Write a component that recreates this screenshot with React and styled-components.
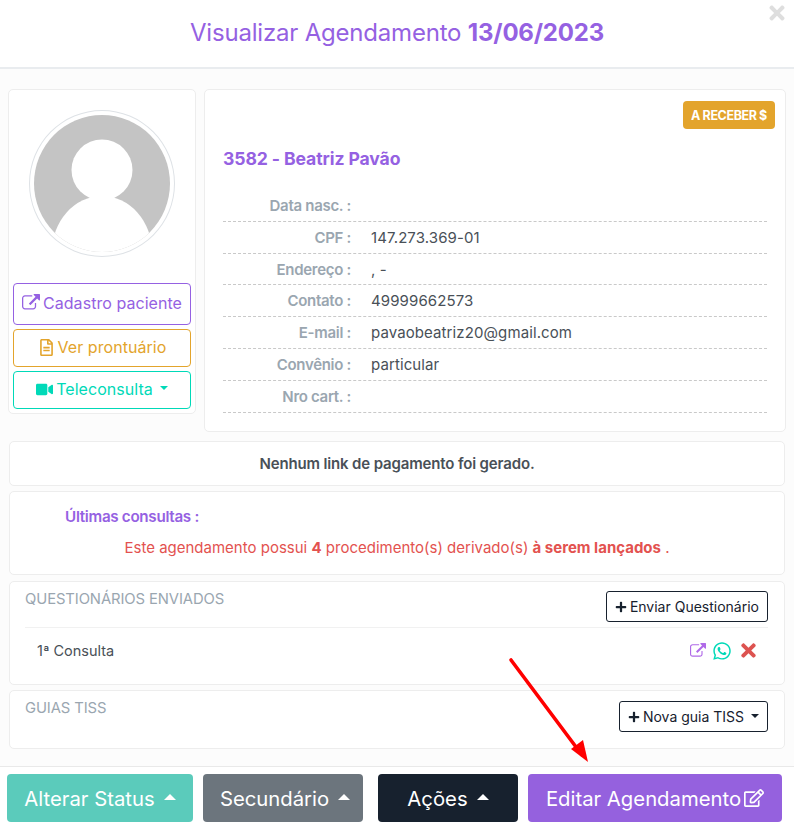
import styled, { createGlobalStyle } from "styled-components";
import {
  FaTimes,
  FaRegFileAlt,
  FaVideo,
  FaWhatsapp,
  FaPlus,
  FaRegEdit,
} from "react-icons/fa";

const Global = createGlobalStyle`
  html, body { margin: 0; padding: 0; background: #fff; }
  * { box-sizing: border-box; }
  body { font-family: Inter, "Liberation Sans", sans-serif; color: #495057; }
`;

const purple = "#9561e2";
const orange = "#e3a42c";
const teal = "#00d9b8";

const Modal = styled.div`
  position: relative;
  width: 794px;
  height: 833px;
  overflow: hidden;
  background: #fff;
  display: flex;
  flex-direction: column;
`;

const Header = styled.header`
  height: 69px;
  flex: none;
  display: flex;
  justify-content: center;
  padding-top: 18px;
  border-bottom: 2px solid #e9ecef;
`;

const Title = styled.h1`
  margin: 0;
  font-size: 24px;
  line-height: 30px;
  font-weight: 400;
  color: ${purple};
  letter-spacing: -0.2px;
  b {
    font-weight: 700;
  }
`;

const Close = styled.span`
  position: absolute;
  top: 2px;
  right: 6px;
  font-size: 22px;
  line-height: 22px;
  color: #dedede;
`;

const Body = styled.main`
  flex: 1;
  background: #fcfcfc;
  padding: 20px 8px 0;
`;

const TopRow = styled.div`
  display: grid;
  grid-template-columns: 188px 582px;
  gap: 8px;
  align-items: start;
`;

const Card = styled.section`
  background: #fff;
  border: 1px solid #ededed;
  border-radius: 5px;
`;

const ProfileCard = styled(Card)`
  height: 325px;
  padding: 20px 4px 0;
  display: flex;
  flex-direction: column;
  align-items: center;
`;

const Avatar = styled.div`
  width: 146px;
  height: 147px;
  padding: 4px;
  border: 1px solid #dee2e6;
  border-radius: 50%;
  margin-bottom: 26px;
  svg {
    display: block;
  }
`;

const OutlineButton = styled.div`
  width: 178px;
  height: ${(p) => p.$h}px;
  margin-bottom: 4px;
  padding-bottom: 2px;
  border: 1px solid ${(p) => p.$color};
  border-radius: 4px;
  color: ${(p) => p.$color};
  font-size: 16px;
  letter-spacing: 0.05px;
  display: flex;
  align-items: center;
  justify-content: center;
  gap: 3px;
`;

const Caret = styled.span`
  width: 0;
  height: 0;
  margin-left: 4px;
  margin-bottom: 2px;
  border-left: 4px solid transparent;
  border-right: 4px solid transparent;
  border-${(p) => (p.$up ? "bottom" : "top")}: ${(p) => (p.$up ? 6 : 4)}px solid currentColor;
`;

const InfoCard = styled(Card)`
  height: 343px;
  padding: 11px 18px 0;
`;

const BadgeRow = styled.div`
  display: flex;
  justify-content: flex-end;
  margin-right: -8px;
`;

const Badge = styled.span`
  width: 92px;
  height: 28px;
  background: ${orange};
  border-radius: 4px;
  color: #fff;
  font-size: 12.5px;
  font-weight: 700;
  letter-spacing: -0.4px;
  display: flex;
  align-items: center;
  justify-content: center;
`;

const PatientName = styled.h2`
  margin: 19px 0 20px;
  font-size: 17.6px;
  line-height: 22px;
  font-weight: 700;
  color: ${purple};
  letter-spacing: -0.1px;
`;

const InfoList = styled.dl`
  margin: 0;
  width: 544px;
`;

const InfoRow = styled.div`
  height: 31.83px;
  display: flex;
  align-items: center;
  border-bottom: 1px dashed #c9c9c9;
  font-size: 15px;
`;

const InfoLabel = styled.dt`
  width: 128px;
  text-align: right;
  font-weight: 600;
  color: #9aa6b0;
  letter-spacing: -0.3px;
`;

const InfoValue = styled.dd`
  margin: 0 0 0 20px;
  color: #495057;
  letter-spacing: 0.1px;
`;

const WideCard = styled(Card)`
  width: 776px;
  margin: ${(p) => p.$top}px 0 0 1px;
  height: ${(p) => p.$h}px;
`;

const NoLink = styled(WideCard)`
  display: flex;
  align-items: center;
  justify-content: center;
  font-size: 15px;
  font-weight: 600;
  color: #495057;
  letter-spacing: -0.15px;
`;

const ConsultsCard = styled(WideCard)`
  padding: 15px 0 0 55px;
`;

const ConsultsTitle = styled.div`
  font-size: 15.2px;
  line-height: 20px;
  font-weight: 600;
  color: ${purple};
  letter-spacing: -0.3px;
`;

const Warning = styled.p`
  margin: 10px 0 0 -55px;
  text-align: center;
  font-size: 15px;
  line-height: 22px;
  color: #e3524f;
  b {
    font-weight: 700;
  }
`;

const SectionCard = styled(WideCard)`
  padding: 9px 16px 0 15px;
`;

const SectionHead = styled.div`
  display: flex;
  justify-content: space-between;
  align-items: flex-start;
`;

const SectionTitle = styled.span`
  margin-top: -1px;
  font-size: 14.8px;
  line-height: 18px;
  color: #9aa6b0;
  letter-spacing: -0.1px;
`;

const DarkButton = styled.div`
  height: 31px;
  margin-top: ${(p) => p.$mt || 0}px;
  padding: 0 8px;
  border: 1px solid #17212e;
  border-radius: 3px;
  color: #17212e;
  font-size: 14px;
  display: flex;
  align-items: center;
  gap: 3px;
  background: #fff;
`;

const QuestionRow = styled.div`
  margin-top: 5px;
  padding: 12px 9px 0 12px;
  border-top: 1px solid #f1f1f1;
  display: flex;
  justify-content: space-between;
  align-items: center;
  font-size: 14.5px;
  color: #495057;
`;

const RowIcons = styled.div`
  display: flex;
  align-items: center;
  gap: 6px;
`;

const Footer = styled.footer`
  height: 67px;
  flex: none;
  background: #fff;
  border-top: 1px solid #e9e9e9;
  padding: 7px 0 0 7px;
  display: flex;
  align-items: flex-start;
`;

const FooterButton = styled.div`
  width: ${(p) => p.$w}px;
  margin-left: ${(p) => p.$ml || 0}px;
  padding-left: ${(p) => p.$pl || 0}px;
  height: 48px;
  background: ${(p) => p.$bg};
  border-radius: 4px;
  color: #fff;
  font-size: 20.3px;
  display: flex;
  align-items: center;
  justify-content: center;
  gap: 3px;
  ${Caret} {
    margin-left: 6px;
    border-left-width: 6px;
    border-right-width: 6px;
  }
`;

const Arrow = styled.svg`
  position: absolute;
  left: 500px;
  top: 650px;
`;

const ExternalIcon = ({ size, color }) => (
  <svg width={size} height={size} viewBox="0 0 1792 1792" fill={color}>
    <path d="M1408 928v320q0 119-84.5 203.5t-203.5 84.5h-832q-119 0-203.5-84.5t-84.5-203.5v-832q0-119 84.5-203.5t203.5-84.5h704q14 0 23 9t9 23v64q0 14-9 23t-23 9h-704q-66 0-113 47t-47 113v832q0 66 47 113t113 47h832q66 0 113-47t47-113v-320q0-14 9-23t23-9h64q14 0 23 9t9 23zm384-864v512q0 26-19 45t-45 19-45-19l-176-176-652 652q-10 10-23 10t-23-10l-114-114q-10-10-10-23t10-23l652-652-176-176q-19-19-19-45t19-45 45-19h512q26 0 45 19t19 45z" />
  </svg>
);

const AvatarImage = () => (
  <svg width="136" height="137" viewBox="0 0 136 137">
    <defs>
      <clipPath id="avatar-clip">
        <ellipse cx="68" cy="68.5" rx="68" ry="68.5" />
      </clipPath>
    </defs>
    <ellipse cx="68" cy="68.5" rx="68" ry="68.5" fill="#c4c4c4" />
    <g clipPath="url(#avatar-clip)" fill="#fff">
      <circle cx="68" cy="55" r="30.5" />
      <ellipse cx="68" cy="137" rx="50" ry="56" />
    </g>
  </svg>
);

const patientRows = [
  ["Data nasc. :", ""],
  ["CPF :", "147.273.369-01"],
  ["Endereço :", ", -"],
  ["Contato :", "49999662573"],
  ["E-mail :", "pavaobeatriz20@gmail.com"],
  ["Convênio :", "particular"],
  ["Nro cart. :", ""],
];

export default function App() {
  return (
    <Modal>
      <Global />
      <Close>
        <FaTimes />
      </Close>
      <Header>
        <Title>
          Visualizar Agendamento <b>13/06/2023</b>
        </Title>
      </Header>

      <Body>
        <TopRow>
          <ProfileCard>
            <Avatar>
              <AvatarImage />
            </Avatar>
            <OutlineButton $color={purple} $h={42}>
              <ExternalIcon size={18} color={purple} /> Cadastro paciente
            </OutlineButton>
            <OutlineButton $color={orange} $h={38}>
              <FaRegFileAlt size={17} /> Ver prontuário
            </OutlineButton>
            <OutlineButton $color={teal} $h={38}>
              <FaVideo size={17} /> Teleconsulta <Caret />
            </OutlineButton>
          </ProfileCard>

          <InfoCard>
            <BadgeRow>
              <Badge>A RECEBER $</Badge>
            </BadgeRow>
            <PatientName>3582 - Beatriz Pavão</PatientName>
            <InfoList>
              {patientRows.map(([label, value]) => (
                <InfoRow key={label}>
                  <InfoLabel>{label}</InfoLabel>
                  <InfoValue>{value}</InfoValue>
                </InfoRow>
              ))}
            </InfoList>
          </InfoCard>
        </TopRow>

        <NoLink $top={9} $h={45}>
          Nenhum link de pagamento foi gerado.
        </NoLink>

        <ConsultsCard $top={5} $h={84}>
          <ConsultsTitle>Últimas consultas :</ConsultsTitle>
          <Warning>
            Este agendamento possui <b>4</b> procedimento(s) derivado(s){" "}
            <b>à serem lançados</b> .
          </Warning>
        </ConsultsCard>

        <SectionCard $top={6} $h={104}>
          <SectionHead>
            <SectionTitle>QUESTIONÁRIOS ENVIADOS</SectionTitle>
            <DarkButton>
              <FaPlus size={12} /> Enviar Questionário
            </DarkButton>
          </SectionHead>
          <QuestionRow>
            <span>1ª Consulta</span>
            <RowIcons>
              <ExternalIcon size={16} color="#b06ae8" />
              <FaWhatsapp size={20} color={teal} />
              <FaTimes size={21} color="#dd5350" />
            </RowIcons>
          </QuestionRow>
        </SectionCard>

        <SectionCard $top={5} $h={59}>
          <SectionHead>
            <SectionTitle>GUIAS TISS</SectionTitle>
            <DarkButton $mt={1}>
              <FaPlus size={12} /> Nova guia TISS <Caret />
            </DarkButton>
          </SectionHead>
        </SectionCard>
      </Body>

      <Footer>
        <FooterButton $bg="#5bcbbb" $w={186}>
          Alterar Status <Caret $up />
        </FooterButton>
        <FooterButton $bg="#6c757d" $w={160} $ml={10} $pl={4}>
          Secundário <Caret $up />
        </FooterButton>
        <FooterButton $bg="#17212e" $w={140} $ml={15}>
          Ações <Caret $up />
        </FooterButton>
        <FooterButton $bg="#9561de" $w={254} $ml={10}>
          Editar Agendamento <FaRegEdit size={20} />
        </FooterButton>
      </Footer>

      <Arrow width="100" height="120" viewBox="0 0 100 120">
        <line x1="11" y1="10" x2="82" y2="105" stroke="#f00" strokeWidth="3.6" strokeLinecap="round" />
        <polygon points="88,112 71,99 83,90" fill="#f00" />
      </Arrow>
    </Modal>
  );
}
